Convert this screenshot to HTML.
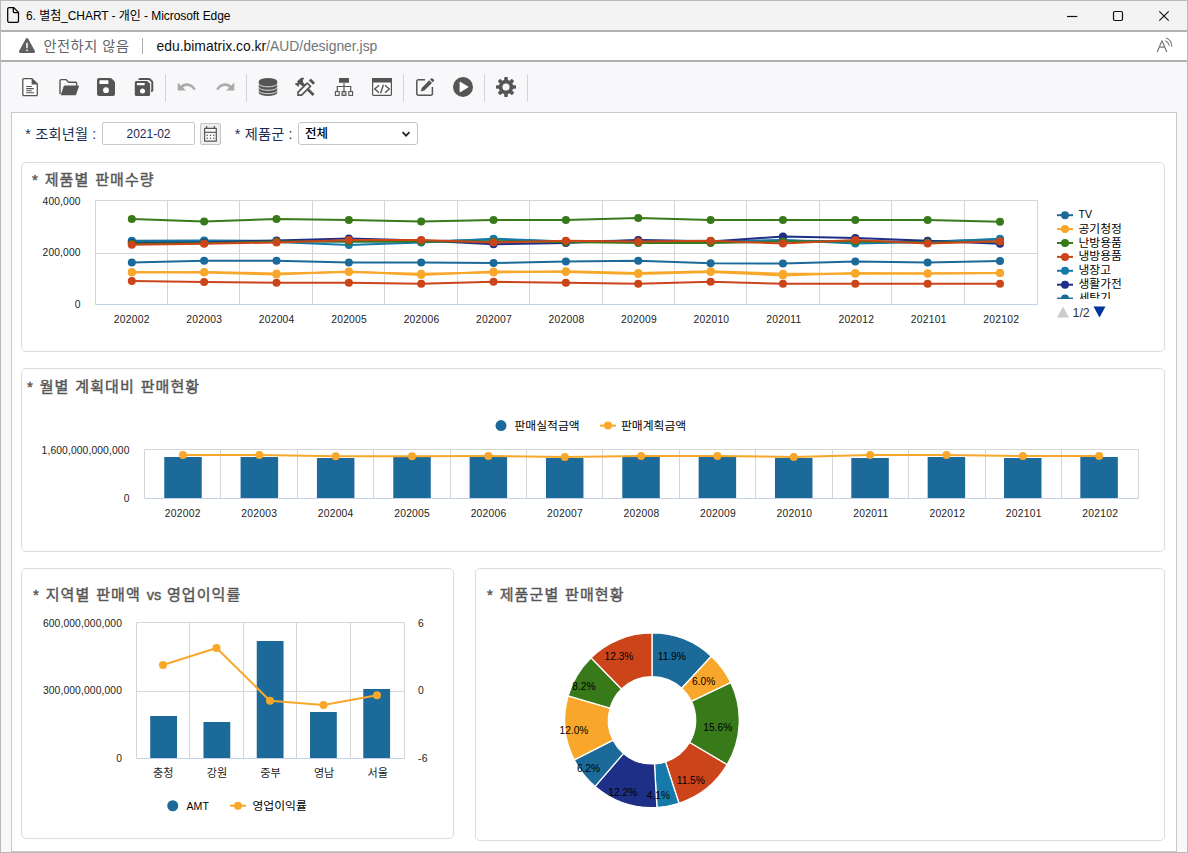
<!DOCTYPE html>
<html lang="ko">
<head>
<meta charset="utf-8">
<title>6. 별첨_CHART - 개인 - Microsoft Edge</title>
<style>
html,body{margin:0;padding:0}
body{width:1188px;height:853px;overflow:hidden;position:relative;background:#f8f8fa;font-family:"Liberation Sans","Noto Sans CJK KR",sans-serif;color:#000}
.abs{position:absolute}
#titlebar{left:0;top:0;width:1188px;height:30px;background:#f3f3f3}
#titletxt{left:26px;top:8px;font-size:12px;letter-spacing:-0.06px;line-height:16px;white-space:nowrap;color:#000}
#addr{left:0;top:32px;width:1188px;height:28px;background:#fff}
.hline{left:0;width:1188px;height:2px;background:#b2b2b2}
#unsafe{left:43.400px;top:36px;font-size:14.2px;letter-spacing:.55px;line-height:20px;color:#60646a;white-space:nowrap}
#url{left:156.500px;top:36px;font-size:13.9px;line-height:20px;color:#111;white-space:nowrap}
#url span{color:#70757a}
#panel{left:11px;top:112px;width:1166px;height:740px;background:#fff;border:1px solid #cacaca;box-sizing:border-box}
.card{background:#fff;border:1px solid #dcdcdc;border-radius:5px;box-sizing:border-box}
.ttl{font-size:15px;font-weight:normal;-webkit-text-stroke:.42px #555;letter-spacing:1.1px;word-spacing:.5px;color:#555;white-space:nowrap;line-height:20px}
.lbl{font-size:14.2px;letter-spacing:.2px;color:#1c2b52;white-space:nowrap;line-height:20px}
.sep{width:1px;height:28px;top:74px;background:#d4d4d4}
svg text{font-family:"Liberation Sans","Noto Sans CJK KR",sans-serif}
.ax text{font-size:10.3px;fill:#222;letter-spacing:.25px}
.ax.num text{letter-spacing:.12px}
.axk text{font-size:11.1px;fill:#222}
text.lg{font-size:11.8px;fill:#000}
text.pg{font-size:12.4px;fill:#333}
.dl text{font-size:10.2px;fill:#000}
.wb{left:0;top:0;width:1188px;height:853px;box-sizing:border-box;border:1px solid #b9b9b9;pointer-events:none}
</style>
</head>
<body>
<div class="abs" id="titlebar"></div>
<svg class="abs" style="left:6px;top:6px" width="15" height="18" viewBox="0 0 15 18"><path d="M1.700 3a1.300 1.300 0 0 1 1.300-1.300h4.800l4.700 4.700v8.600a1.300 1.300 0 0 1-1.300 1.300h-8.200a1.300 1.300 0 0 1-1.300-1.300zM7.300 1.900v3.600a1 1 0 0 0 1 1h3.900" fill="none" stroke="#000" stroke-width="1.250" stroke-linejoin="round"/></svg>
<div class="abs" id="titletxt">6. 별첨_CHART - 개인 - Microsoft Edge</div>
<svg class="abs" style="left:1060px;top:4px" width="120" height="24" viewBox="0 0 120 24"><path d="M7 12.500h10.300" stroke="#111" stroke-width="1.200" fill="none"/><rect x="53.5" y="7.5" width="9" height="9" rx="1.4" fill="none" stroke="#111" stroke-width="1.2"/><path d="M99.300 7.300l9.400 9.400M108.700 7.300l-9.400 9.400" stroke="#111" stroke-width="1.200" fill="none"/></svg>
<div class="abs hline" style="top:30px"></div>
<div class="abs" id="addr"></div>
<svg class="abs" style="left:18px;top:38px" width="18" height="16" viewBox="0 0 18 16"><path d="M9 0c.5 0 .95.270 1.200.700l6.700 12.300c.5.900-.1 2-1.200 2H2.300c-1.100 0-1.700-1.100-1.200-2L7.800.700c.250-.430.700-.700 1.200-.700z" fill="#606060"/><rect x="8.100" y="4.700" width="1.800" height="5.600" rx=".5" fill="#e6e6e6"/><rect x="8.100" y="11.500" width="1.800" height="1.700" rx=".4" fill="#e6e6e6"/></svg>
<div class="abs" id="unsafe">안전하지 않음</div>
<div class="abs" style="left:142px;top:38px;width:1px;height:16px;background:#a9a9a9"></div>
<div class="abs" id="url">edu.bimatrix.co.kr<span>/AUD/designer.jsp</span></div>
<svg class="abs" style="left:1152px;top:36px" width="24" height="20" viewBox="0 0 24 20"><path d="M5.200 16.100L10 4.700L14.800 16.100M6.900 11.100h6.200" fill="none" stroke="#7a7a7a" stroke-width="1.200" stroke-linejoin="round"/><path d="M13.700 4.900A6.100 6.100 0 0 1 17.200 9.400M14.300 2.100A8.800 8.800 0 0 1 19.700 10.400" fill="none" stroke="#7a7a7a" stroke-width="1.100" stroke-linecap="round"/></svg>
<div class="abs hline" style="top:60px;height:2px;background:#b0b0b0"></div>

<!--TB0-->
<div class="abs sep" style="left:165px"></div>
<div class="abs sep" style="left:246px"></div>
<div class="abs sep" style="left:403px"></div>
<div class="abs sep" style="left:484px"></div>
<div class="abs sep" style="left:527px"></div>
<svg class="abs" style="left:20px;top:76px" width="20" height="22" viewBox="0 0 20 22"><path d="M4 2.700h8l5.300 5.300v10.400a1.200 1.200 0 0 1-1.200 1.200H4a1.200 1.200 0 0 1-1.200-1.200V3.900a1.200 1.200 0 0 1 1.200-1.200z" fill="#fff" stroke="#555" stroke-width="1.300" stroke-linejoin="round"/><path d="M11.600 2.500l5.900 5.900h-5.900z" fill="#555"/><path d="M6.200 10.500h5.600M6.200 12.600h7.600M6.200 14.700h5.600M6.200 16.800h8" stroke="#555" stroke-width="1.100" fill="none"/></svg>
<svg class="abs" style="left:57px;top:76px" width="24" height="22" viewBox="0 0 24 22"><path d="M3 18V4.600a1 1 0 0 1 1-1h5.200l2.400 2.600h7a1 1 0 0 1 1 1v2.600" fill="none" stroke="#555" stroke-width="1.400" stroke-linejoin="round"/><path d="M3.700 19.200l3.100-9.100a.9.900 0 0 1 .85-.6h13.600a.7.700 0 0 1 .67.920l-2.800 8.200a.9.900 0 0 1-.85.600H3.700z" fill="#555"/></svg>
<svg class="abs" style="left:95px;top:76px" width="22" height="22" viewBox="0 0 22 22"><path d="M4 2h11.300a2 2 0 0 1 1.400.6l2.700 2.700a2 2 0 0 1 .6 1.400V18a2 2 0 0 1-2 2H4a2 2 0 0 1-2-2V4a2 2 0 0 1 2-2z" fill="#555"/><rect x="4.400" y="4.300" width="9" height="3.800" rx=".5" fill="#fff"/><circle cx="11" cy="14.200" r="2.900" fill="#fff"/></svg>
<svg class="abs" style="left:132px;top:76px" width="24" height="22" viewBox="0 0 24 22"><path d="M7.400 4V3.600a.6.600 0 0 1 .6-.6h8.900a1.500 1.500 0 0 1 1.060.44l1.900 1.900a1.500 1.500 0 0 1 .44 1.060v7.900a.6.600 0 0 1-.6.600h-.6" fill="none" stroke="#555" stroke-width="2"/><path d="M4.300 4.900h10.300a1.500 1.500 0 0 1 1.060.44l2 2a1.500 1.500 0 0 1 .44 1.060V18.400a1.500 1.500 0 0 1-1.500 1.500H4.300a1.500 1.500 0 0 1-1.500-1.500V6.400a1.500 1.500 0 0 1 1.500-1.500z" fill="#555"/><rect x="4.900" y="6.900" width="7.800" height="2.400" rx=".4" fill="#fff"/><circle cx="10.500" cy="15" r="2.500" fill="#fff"/></svg>
<svg class="abs" style="left:176px;top:80px" width="22" height="14" viewBox="0 0 22 14"><path d="M1.700 2.400v8.200h8.200l-3.100-3.100c1.300-1.100 3-1.700 4.800-1.500c2.600.3 4.800 1.900 5.900 4.200l2.200-1.100C18.200 6 15.300 3.800 11.900 3.400C9.300 3.100 6.800 4 5 5.700z" fill="#aaa"/></svg>
<svg class="abs" style="left:214px;top:80px" width="22" height="14" viewBox="0 0 22 14"><path d="M20.300 2.400v8.200h-8.200l3.100-3.100c-1.300-1.100-3-1.700-4.800-1.500c-2.600.3-4.800 1.900-5.900 4.200l-2.200-1.100C3.800 6 6.700 3.800 10.100 3.400c2.600-.3 5.100.6 6.900 2.300z" fill="#aaa"/></svg>
<svg class="abs" style="left:257px;top:76px" width="22" height="22" viewBox="0 0 22 22"><path d="M1.800 5.100A9.200 3.100 0 0 1 20.200 5.100V16.800A9.200 3.100 0 0 1 1.800 16.800Z" fill="#555"/><path d="M1.800 7.700A9.200 3.100 0 0 0 20.200 7.700M1.800 11.200A9.200 3.100 0 0 0 20.200 11.200M1.800 14.600A9.200 3.100 0 0 0 20.200 14.600" fill="none" stroke="#f8f8fa" stroke-width=".8"/></svg>
<svg class="abs" style="left:290px;top:72px" width="30" height="30" viewBox="0 0 30 30"><path d="M10.600 6.200L12.300 5.500L14.200 6.200L12.800 8.300L13.200 10.600L14.400 12.100L12 13.700L9.300 12.100L8.800 13.900L8.600 15.100L4.900 12.100L5.100 11.300L7.600 10.900L7.200 9.300Z" fill="#555"/><path d="M12.800 12.500L23.600 22.900" stroke="#555" stroke-width="2.800" fill="none"/><path d="M17.200 10.100L21.600 14.200L12 23.900H7.200V19.800Z" fill="#555"/><path d="M17.250 12.300L19.250 14.300L11.250 22.300H8.800V20.750Z" fill="#fbfbfc"/><path d="M18.850 8.450L23.100 12.700L24.600 11.200Q25.050 10.750 24.600 10.300L21.250 6.950Q20.800 6.500 20.350 6.950Z" fill="#555"/></svg>
<svg class="abs" style="left:333px;top:76px" width="22" height="22" viewBox="0 0 22 22"><rect x="6" y="2" width="10" height="4.800" rx=".6" fill="#555"/><path d="M10 6.800h2v8.200h-2z" fill="#999"/><path d="M4.300 15.200v-4.700h13.400v4.700" fill="none" stroke="#555" stroke-width="1.200"/><rect x="2.400" y="15.600" width="3.800" height="3.800" fill="#fff" stroke="#555" stroke-width="1.100"/><rect x="9.100" y="15.600" width="3.800" height="3.800" fill="#ccc" stroke="#555" stroke-width="1.100"/><rect x="15.800" y="15.600" width="3.800" height="3.800" fill="#fff" stroke="#555" stroke-width="1.100"/></svg>
<svg class="abs" style="left:370px;top:76px" width="24" height="22" viewBox="0 0 24 22"><rect x="2.600" y="2.600" width="18.800" height="16.800" rx=".8" fill="#fff" stroke="#555" stroke-width="1.200"/><rect x="2" y="2" width="20" height="4.500" fill="#555"/><path d="M9 9.300l-4.300 3.700l4.300 3.700M15 9.300l4.300 3.700l-4.300 3.700M13.400 8.800l-2.800 8.400" fill="none" stroke="#555" stroke-width="1.400"/></svg>
<svg class="abs" style="left:414px;top:75px" width="23" height="23" viewBox="0 0 23 23"><path d="M11 4.700H4.400a1.600 1.600 0 0 0-1.600 1.600v12.400a1.600 1.600 0 0 0 1.600 1.600h12.400a1.600 1.600 0 0 0 1.600-1.600v-6.600" fill="none" stroke="#555" stroke-width="1.500"/><path d="M15.300 5.300l2.700 2.700l-7.600 7.600l-3.600.9l.9-3.600zM16.100 4.500l1.100-1.100a.9.900 0 0 1 1.300 0l1.400 1.400a.9.900 0 0 1 0 1.300l-1.100 1.100z" fill="#555"/></svg>
<svg class="abs" style="left:452px;top:76px" width="22" height="22" viewBox="0 0 22 22"><circle cx="11" cy="11" r="10" fill="#555"/><path d="M8 6l8.200 5l-8.200 5z" fill="#fff" stroke="#fff" stroke-width=".8" stroke-linejoin="round"/></svg>
<svg class="abs" style="left:495px;top:76px" width="22" height="22" viewBox="0 0 22 22"><g fill="#555"><circle cx="11" cy="11" r="7.300"/><rect x="9.200" y="1" width="3.600" height="20" rx=".8"/><rect x="9.200" y="1" width="3.600" height="20" rx=".8" transform="rotate(45 11 11)"/><rect x="9.200" y="1" width="3.600" height="20" rx=".8" transform="rotate(90 11 11)"/><rect x="9.200" y="1" width="3.600" height="20" rx=".8" transform="rotate(135 11 11)"/></g><circle cx="11" cy="11" r="3.600" fill="#f8f8fa"/></svg>
<!--TB1-->

<div class="abs" id="panel"></div>
<div class="abs lbl" style="left:25.300px;top:124px">* 조회년월 :</div>
<div class="abs" style="left:102px;top:122px;width:93px;height:23px;box-sizing:border-box;border:1px solid #c9c9c9;border-radius:2px;background:#fff;font-size:12px;line-height:22px;text-align:center;color:#1c2b52">2021-02</div>
<div class="abs" style="left:200px;top:123px;width:21px;height:22px;box-sizing:border-box;border:1px solid #c4c4c8;border-radius:2px;background:#efeff1"></div>
<svg class="abs" style="left:203px;top:125px" width="15" height="18" viewBox="0 0 15 18"><rect x="1.600" y="3.400" width="11.700" height="12.800" rx=".3" fill="#fbfbfb" stroke="#555" stroke-width="1.200"/><path d="M1.600 7.300h11.700" stroke="#555" stroke-width="1.200"/><path d="M3.600 1v2.600M11.400 1v2.600" stroke="#555" stroke-width="1.300"/><g fill="#555"><rect x="3.500" y="9.600" width="1.300" height="1.300"/><rect x="6.850" y="9.600" width="1.300" height="1.300"/><rect x="10.100" y="9.600" width="1.300" height="1.300"/><rect x="3.500" y="12.600" width="1.300" height="1.300"/><rect x="6.850" y="12.600" width="1.300" height="1.300"/><rect x="10.100" y="12.600" width="1.300" height="1.300"/></g></svg>
<div class="abs lbl" style="left:234.800px;top:124px">* 제품군 :</div>
<div class="abs" style="left:298px;top:122px;width:120px;height:23px;box-sizing:border-box;border:1px solid #c4c4c4;border-radius:3px;background:#fff;font-size:12.5px;line-height:22px;color:#000;padding-left:6px;font-weight:500">전체</div>
<svg class="abs" style="left:400px;top:129px" width="12" height="10" viewBox="0 0 12 10"><path d="M2.500 3.200l3.500 3.500l3.500-3.500" fill="none" stroke="#222" stroke-width="1.700"/></svg>

<div class="abs card" style="left:21px;top:162px;width:1144px;height:190px"></div>
<div class="abs card" style="left:21px;top:368px;width:1144px;height:184px"></div>
<div class="abs card" style="left:21px;top:568px;width:433px;height:271px"></div>
<div class="abs card" style="left:475px;top:568px;width:690px;height:273px"></div>
<div class="abs ttl" style="left:32px;top:170px">* 제품별 판매수량</div>
<div class="abs ttl" style="left:27px;top:377px">* 월별 계획대비 판매현황</div>
<div class="abs ttl" style="left:33px;top:585px">* 지역별 판매액 <span style="letter-spacing:0;font-size:14.5px">vs</span> 영업이익률</div>
<div class="abs ttl" style="left:487px;top:585px">* 제품군별 판매현황</div>

<svg width="1188" height="853" viewBox="0 0 1188 853" style="position:absolute;left:0;top:0">
<path d="M95.5 200.5V304.5M167.5 200.5V304.5M239.5 200.5V304.5M312.5 200.5V304.5M384.5 200.5V304.5M457.5 200.5V304.5M529.5 200.5V304.5M602.5 200.5V304.5M674.5 200.5V304.5M746.5 200.5V304.5M819.5 200.5V304.5M891.5 200.5V304.5M964.5 200.5V304.5M1037.5 200.5V304.5M95.5 200.5H1037.5M95.5 253.5H1037.5" stroke="#d6d6d6" stroke-width="1" fill="none"/>
<path d="M95.5 304.5H1037.5" stroke="#c3d0e8" stroke-width="1" fill="none"/>
<polyline points="131.8,240.75 204.15,240.5 276.5,241 348.85,241.5 421.2,241.5 493.55,239.5 565.9,241.5 638.25,240.5 710.6,241 782.95,240.5 855.3,241.5 927.65,241.5 1000,239.5" fill="none" stroke="#1b6a99" stroke-width="2" stroke-linejoin="round"/>
<g fill="#1b6a99"><circle cx="131.8" cy="240.75" r="4"/><circle cx="204.15" cy="240.5" r="4"/><circle cx="276.5" cy="241" r="4"/><circle cx="348.85" cy="241.5" r="4"/><circle cx="421.2" cy="241.5" r="4"/><circle cx="493.55" cy="239.5" r="4"/><circle cx="565.9" cy="241.5" r="4"/><circle cx="638.25" cy="240.5" r="4"/><circle cx="710.6" cy="241" r="4"/><circle cx="782.95" cy="240.5" r="4"/><circle cx="855.3" cy="241.5" r="4"/><circle cx="927.65" cy="241.5" r="4"/><circle cx="1000" cy="239.5" r="4"/></g>
<polyline points="131.8,272.5 204.15,272 276.5,273.5 348.85,272 421.2,273.75 493.55,272.5 565.9,271.25 638.25,273 710.6,271.25 782.95,273.75 855.3,273.75 927.65,273.5 1000,273" fill="none" stroke="#f8a72a" stroke-width="2" stroke-linejoin="round"/>
<g fill="#f8a72a"><circle cx="131.8" cy="272.5" r="4"/><circle cx="204.15" cy="272" r="4"/><circle cx="276.5" cy="273.5" r="4"/><circle cx="348.85" cy="272" r="4"/><circle cx="421.2" cy="273.75" r="4"/><circle cx="493.55" cy="272.5" r="4"/><circle cx="565.9" cy="271.25" r="4"/><circle cx="638.25" cy="273" r="4"/><circle cx="710.6" cy="271.25" r="4"/><circle cx="782.95" cy="273.75" r="4"/><circle cx="855.3" cy="273.75" r="4"/><circle cx="927.65" cy="273.5" r="4"/><circle cx="1000" cy="273" r="4"/></g>
<polyline points="131.8,219 204.15,221.5 276.5,219 348.85,220 421.2,221.5 493.55,220 565.9,220 638.25,218 710.6,220 782.95,220 855.3,220 927.65,220 1000,221.75" fill="none" stroke="#38791a" stroke-width="2" stroke-linejoin="round"/>
<g fill="#38791a"><circle cx="131.8" cy="219" r="4"/><circle cx="204.15" cy="221.5" r="4"/><circle cx="276.5" cy="219" r="4"/><circle cx="348.85" cy="220" r="4"/><circle cx="421.2" cy="221.5" r="4"/><circle cx="493.55" cy="220" r="4"/><circle cx="565.9" cy="220" r="4"/><circle cx="638.25" cy="218" r="4"/><circle cx="710.6" cy="220" r="4"/><circle cx="782.95" cy="220" r="4"/><circle cx="855.3" cy="220" r="4"/><circle cx="927.65" cy="220" r="4"/><circle cx="1000" cy="221.75" r="4"/></g>
<polyline points="131.8,281 204.15,282 276.5,282.75 348.85,282.75 421.2,283.75 493.55,281.75 565.9,282.75 638.25,283.75 710.6,281.75 782.95,283.75 855.3,283.75 927.65,283.75 1000,283.75" fill="none" stroke="#cb441a" stroke-width="2" stroke-linejoin="round"/>
<g fill="#cb441a"><circle cx="131.8" cy="281" r="4"/><circle cx="204.15" cy="282" r="4"/><circle cx="276.5" cy="282.75" r="4"/><circle cx="348.85" cy="282.75" r="4"/><circle cx="421.2" cy="283.75" r="4"/><circle cx="493.55" cy="281.75" r="4"/><circle cx="565.9" cy="282.75" r="4"/><circle cx="638.25" cy="283.75" r="4"/><circle cx="710.6" cy="281.75" r="4"/><circle cx="782.95" cy="283.75" r="4"/><circle cx="855.3" cy="283.75" r="4"/><circle cx="927.65" cy="283.75" r="4"/><circle cx="1000" cy="283.75" r="4"/></g>
<polyline points="131.8,241.5 204.15,241 276.5,242 348.85,245 421.2,242.5 493.55,238.75 565.9,241.5 638.25,241.5 710.6,241.5 782.95,240 855.3,243.5 927.65,242 1000,238.75" fill="none" stroke="#157aa9" stroke-width="2" stroke-linejoin="round"/>
<g fill="#157aa9"><circle cx="131.8" cy="241.5" r="4"/><circle cx="204.15" cy="241" r="4"/><circle cx="276.5" cy="242" r="4"/><circle cx="348.85" cy="245" r="4"/><circle cx="421.2" cy="242.5" r="4"/><circle cx="493.55" cy="238.75" r="4"/><circle cx="565.9" cy="241.5" r="4"/><circle cx="638.25" cy="241.5" r="4"/><circle cx="710.6" cy="241.5" r="4"/><circle cx="782.95" cy="240" r="4"/><circle cx="855.3" cy="243.5" r="4"/><circle cx="927.65" cy="242" r="4"/><circle cx="1000" cy="238.75" r="4"/></g>
<polyline points="131.8,243 204.15,242.5 276.5,240.5 348.85,238.5 421.2,240.5 493.55,244.25 565.9,243 638.25,240 710.6,241.5 782.95,236.5 855.3,238 927.65,240.75 1000,243.75" fill="none" stroke="#1e2f87" stroke-width="2" stroke-linejoin="round"/>
<g fill="#1e2f87"><circle cx="131.8" cy="243" r="4"/><circle cx="204.15" cy="242.5" r="4"/><circle cx="276.5" cy="240.5" r="4"/><circle cx="348.85" cy="238.5" r="4"/><circle cx="421.2" cy="240.5" r="4"/><circle cx="493.55" cy="244.25" r="4"/><circle cx="565.9" cy="243" r="4"/><circle cx="638.25" cy="240" r="4"/><circle cx="710.6" cy="241.5" r="4"/><circle cx="782.95" cy="236.5" r="4"/><circle cx="855.3" cy="238" r="4"/><circle cx="927.65" cy="240.75" r="4"/><circle cx="1000" cy="243.75" r="4"/></g>
<polyline points="131.8,262.5 204.15,260.75 276.5,260.75 348.85,262.5 421.2,262.5 493.55,263 565.9,261.5 638.25,260.75 710.6,263.25 782.95,263.5 855.3,261.5 927.65,262.5 1000,261" fill="none" stroke="#1b6a99" stroke-width="2" stroke-linejoin="round"/>
<g fill="#1b6a99"><circle cx="131.8" cy="262.5" r="4"/><circle cx="204.15" cy="260.75" r="4"/><circle cx="276.5" cy="260.75" r="4"/><circle cx="348.85" cy="262.5" r="4"/><circle cx="421.2" cy="262.5" r="4"/><circle cx="493.55" cy="263" r="4"/><circle cx="565.9" cy="261.5" r="4"/><circle cx="638.25" cy="260.75" r="4"/><circle cx="710.6" cy="263.25" r="4"/><circle cx="782.95" cy="263.5" r="4"/><circle cx="855.3" cy="261.5" r="4"/><circle cx="927.65" cy="262.5" r="4"/><circle cx="1000" cy="261" r="4"/></g>
<polyline points="131.8,272 204.15,272.5 276.5,274.5 348.85,271.5 421.2,275 493.55,271.5 565.9,272 638.25,274 710.6,272 782.95,275.5 855.3,273 927.65,273.5 1000,273" fill="none" stroke="#f8a72a" stroke-width="2" stroke-linejoin="round"/>
<g fill="#f8a72a"><circle cx="131.8" cy="272" r="4"/><circle cx="204.15" cy="272.5" r="4"/><circle cx="276.5" cy="274.5" r="4"/><circle cx="348.85" cy="271.5" r="4"/><circle cx="421.2" cy="275" r="4"/><circle cx="493.55" cy="271.5" r="4"/><circle cx="565.9" cy="272" r="4"/><circle cx="638.25" cy="274" r="4"/><circle cx="710.6" cy="272" r="4"/><circle cx="782.95" cy="275.5" r="4"/><circle cx="855.3" cy="273" r="4"/><circle cx="927.65" cy="273.5" r="4"/><circle cx="1000" cy="273" r="4"/></g>
<polyline points="131.8,243.8 204.15,243.2 276.5,241.5 348.85,241.5 421.2,241.5 493.55,241.5 565.9,242 638.25,243 710.6,243 782.95,241.5 855.3,241.5 927.65,242.5 1000,241.5" fill="none" stroke="#38791a" stroke-width="2" stroke-linejoin="round"/>
<g fill="#38791a"><circle cx="131.8" cy="243.8" r="4"/><circle cx="204.15" cy="243.2" r="4"/><circle cx="276.5" cy="241.5" r="4"/><circle cx="348.85" cy="241.5" r="4"/><circle cx="421.2" cy="241.5" r="4"/><circle cx="493.55" cy="241.5" r="4"/><circle cx="565.9" cy="242" r="4"/><circle cx="638.25" cy="243" r="4"/><circle cx="710.6" cy="243" r="4"/><circle cx="782.95" cy="241.5" r="4"/><circle cx="855.3" cy="241.5" r="4"/><circle cx="927.65" cy="242.5" r="4"/><circle cx="1000" cy="241.5" r="4"/></g>
<polyline points="131.8,244.75 204.15,243.75 276.5,242.5 348.85,240 421.2,240 493.55,242.5 565.9,240.75 638.25,241.5 710.6,240.75 782.95,243.5 855.3,240 927.65,243.5 1000,241.25" fill="none" stroke="#cb441a" stroke-width="2" stroke-linejoin="round"/>
<g fill="#cb441a"><circle cx="131.8" cy="244.75" r="4"/><circle cx="204.15" cy="243.75" r="4"/><circle cx="276.5" cy="242.5" r="4"/><circle cx="348.85" cy="240" r="4"/><circle cx="421.2" cy="240" r="4"/><circle cx="493.55" cy="242.5" r="4"/><circle cx="565.9" cy="240.75" r="4"/><circle cx="638.25" cy="241.5" r="4"/><circle cx="710.6" cy="240.75" r="4"/><circle cx="782.95" cy="243.5" r="4"/><circle cx="855.3" cy="240" r="4"/><circle cx="927.65" cy="243.5" r="4"/><circle cx="1000" cy="241.25" r="4"/></g>
<g class="ax" text-anchor="middle"><text x="131.73" y="323">202002</text><text x="204.19" y="323">202003</text><text x="276.65" y="323">202004</text><text x="349.12" y="323">202005</text><text x="421.58" y="323">202006</text><text x="494.04" y="323">202007</text><text x="566.5" y="323">202008</text><text x="638.96" y="323">202009</text><text x="711.42" y="323">202010</text><text x="783.88" y="323">202011</text><text x="856.35" y="323">202012</text><text x="928.81" y="323">202101</text><text x="1001.27" y="323">202102</text></g>
<g class="ax num" text-anchor="end"><text x="80.6" y="205">400,000</text><text x="80.6" y="256">200,000</text><text x="80.6" y="308">0</text></g>
<clipPath id="lc"><rect x="1050" y="205" width="110" height="94"/></clipPath><g clip-path="url(#lc)">
<path d="M1057 215.2h16" stroke="#1b6a99" stroke-width="2"/><circle cx="1065" cy="215.2" r="4" fill="#1b6a99"/><text class="lg" x="1078.5" y="218.2" style="font-size:10.6px">TV</text>
<path d="M1057 229.1h16" stroke="#f8a72a" stroke-width="2"/><circle cx="1065" cy="229.1" r="4" fill="#f8a72a"/><text class="lg" x="1078.5" y="232.6">공기청정</text>
<path d="M1057 243h16" stroke="#38791a" stroke-width="2"/><circle cx="1065" cy="243" r="4" fill="#38791a"/><text class="lg" x="1078.5" y="246.5">난방용품</text>
<path d="M1057 256.9h16" stroke="#cb441a" stroke-width="2"/><circle cx="1065" cy="256.9" r="4" fill="#cb441a"/><text class="lg" x="1078.5" y="260.4">냉방용품</text>
<path d="M1057 270.8h16" stroke="#157aa9" stroke-width="2"/><circle cx="1065" cy="270.8" r="4" fill="#157aa9"/><text class="lg" x="1078.5" y="274.3">냉장고</text>
<path d="M1057 284.7h16" stroke="#1e2f87" stroke-width="2"/><circle cx="1065" cy="284.7" r="4" fill="#1e2f87"/><text class="lg" x="1078.5" y="288.2">생활가전</text>
<path d="M1057 298.6h16" stroke="#1b6a99" stroke-width="2"/><circle cx="1065" cy="298.6" r="4" fill="#1b6a99"/><text class="lg" x="1078.5" y="302.1">세탁기</text>
</g>
<path d="M1057 317.600l6-11.200l6 11.200z" fill="#cccccc"/><path d="M1093.500 306.400h12l-6 11.200z" fill="#003399"/><text x="1072.500" y="316.500" class="pg">1/2</text>
<path d="M144.5 449.5V498.5M220.5 449.5V498.5M297.5 449.5V498.5M373.5 449.5V498.5M450.5 449.5V498.5M526.5 449.5V498.5M602.5 449.5V498.5M679.5 449.5V498.5M755.5 449.5V498.5M832.5 449.5V498.5M908.5 449.5V498.5M985.5 449.5V498.5M1061.5 449.5V498.5M1138.5 449.5V498.5M144.5 449.5H1138.5" stroke="#d6d6d6" stroke-width="1" fill="none"/>
<g fill="#1b6a99"><rect x="164.25" y="457" width="37.5" height="41"/><rect x="240.59" y="457" width="37.5" height="41"/><rect x="316.93" y="458" width="37.5" height="40"/><rect x="393.27" y="457" width="37.5" height="41"/><rect x="469.61" y="457" width="37.5" height="41"/><rect x="545.95" y="458" width="37.5" height="40"/><rect x="622.29" y="457" width="37.5" height="41"/><rect x="698.63" y="457" width="37.5" height="41"/><rect x="774.97" y="458" width="37.5" height="40"/><rect x="851.31" y="458" width="37.5" height="40"/><rect x="927.65" y="457" width="37.5" height="41"/><rect x="1003.99" y="458" width="37.5" height="40"/><rect x="1080.33" y="457" width="37.5" height="41"/></g>
<path d="M144.5 498.5H1138.5" stroke="#c3d0e8" stroke-width="1" fill="none"/>
<polyline points="183,455 259.35,455 335.7,456.25 412.05,456.25 488.4,456 564.75,457 641.1,456 717.45,456 793.8,457 870.15,455 946.5,455 1022.85,456 1099.2,456" fill="none" stroke="#f8a72a" stroke-width="2" stroke-linejoin="round"/>
<g fill="#f8a72a"><circle cx="183" cy="455" r="4"/><circle cx="259.35" cy="455" r="4"/><circle cx="335.7" cy="456.25" r="4"/><circle cx="412.05" cy="456.25" r="4"/><circle cx="488.4" cy="456" r="4"/><circle cx="564.75" cy="457" r="4"/><circle cx="641.1" cy="456" r="4"/><circle cx="717.45" cy="456" r="4"/><circle cx="793.8" cy="457" r="4"/><circle cx="870.15" cy="455" r="4"/><circle cx="946.5" cy="455" r="4"/><circle cx="1022.85" cy="456" r="4"/><circle cx="1099.2" cy="456" r="4"/></g>
<g class="ax" text-anchor="middle"><text x="182.73" y="517">202002</text><text x="259.19" y="517">202003</text><text x="335.65" y="517">202004</text><text x="412.12" y="517">202005</text><text x="488.58" y="517">202006</text><text x="565.04" y="517">202007</text><text x="641.5" y="517">202008</text><text x="717.96" y="517">202009</text><text x="794.42" y="517">202010</text><text x="870.88" y="517">202011</text><text x="947.35" y="517">202012</text><text x="1023.81" y="517">202101</text><text x="1100.27" y="517">202102</text></g>
<g class="ax num" text-anchor="end"><text x="129.5" y="454">1,600,000,000,000</text><text x="129.5" y="502">0</text></g>
<circle cx="501" cy="425.6" r="5.5" fill="#1b6a99"/><text class="lg" x="514.5" y="429.6">판매실적금액</text>
<path d="M600 425.6h16" stroke="#f8a72a" stroke-width="2"/><circle cx="608" cy="425.6" r="4" fill="#f8a72a"/><text class="lg" x="621" y="429.6">판매계획금액</text>
<path d="M136.5 622.5V758.5M189.5 622.5V758.5M243.5 622.5V758.5M296.5 622.5V758.5M350.5 622.5V758.5M404.5 622.5V758.5M136.5 622.5H404.5M136.5 691.5H404.5" stroke="#d6d6d6" stroke-width="1" fill="none"/>
<g fill="#1b6a99"><rect x="150.2" y="716" width="26.8" height="42"/><rect x="203.47" y="722" width="26.8" height="36"/><rect x="256.74" y="641" width="26.8" height="117"/><rect x="310.01" y="712" width="26.8" height="46"/><rect x="363.28" y="689" width="26.8" height="69"/></g>
<path d="M136.5 758.5H404.5" stroke="#c3d0e8" stroke-width="1" fill="none"/>
<polyline points="163,665 216.5,648 270,700.75 323.5,705 377,695.25" fill="none" stroke="#f8a72a" stroke-width="2" stroke-linejoin="round"/>
<g fill="#f8a72a"><circle cx="163" cy="665" r="4"/><circle cx="216.5" cy="648" r="4"/><circle cx="270" cy="700.75" r="4"/><circle cx="323.5" cy="705" r="4"/><circle cx="377" cy="695.25" r="4"/></g>
<g class="axk" text-anchor="middle"><text x="163.3" y="777">충청</text><text x="216.9" y="777">강원</text><text x="270.5" y="777">중부</text><text x="324.1" y="777">영남</text><text x="377.7" y="777">서울</text></g>
<g class="ax num" text-anchor="end"><text x="122" y="627">600,000,000,000</text><text x="122" y="694">300,000,000,000</text><text x="122" y="762">0</text></g>
<g class="ax"><text x="418" y="626.8">6</text><text x="418" y="694">0</text><text x="418" y="762">-6</text></g>
<circle cx="172.75" cy="805.75" r="5.5" fill="#1b6a99"/><text class="lg" x="186.5" y="809.75" style="font-size:10.6px">AMT</text>
<path d="M230 805.75h16" stroke="#f8a72a" stroke-width="2"/><circle cx="238" cy="805.75" r="4" fill="#f8a72a"/><text class="lg" x="252.5" y="809.75">영업이익률</text>
<path d="M652 632.95A87.3 87.3 0 0 1 711.36 656.24L681.71 688.21A43.7 43.7 0 0 0 652 676.55Z" fill="#1b6a99" stroke="#fff" stroke-width="1.3" stroke-linejoin="round"/>
<path d="M711.36 656.24A87.3 87.3 0 0 1 730.76 682.58L691.42 701.4A43.7 43.7 0 0 0 681.71 688.21Z" fill="#f8a72a" stroke="#fff" stroke-width="1.3" stroke-linejoin="round"/>
<path d="M730.76 682.58A87.3 87.3 0 0 1 727.14 764.69L689.61 742.5A43.7 43.7 0 0 0 691.42 701.4Z" fill="#38791a" stroke="#fff" stroke-width="1.3" stroke-linejoin="round"/>
<path d="M727.14 764.69A87.3 87.3 0 0 1 678.98 803.28L665.5 761.81A43.7 43.7 0 0 0 689.61 742.5Z" fill="#cb441a" stroke="#fff" stroke-width="1.3" stroke-linejoin="round"/>
<path d="M678.98 803.28A87.3 87.3 0 0 1 656.93 807.41L654.47 763.88A43.7 43.7 0 0 0 665.5 761.81Z" fill="#157aa9" stroke="#fff" stroke-width="1.3" stroke-linejoin="round"/>
<path d="M656.93 807.41A87.3 87.3 0 0 1 595.09 786.45L623.51 753.39A43.7 43.7 0 0 0 654.47 763.88Z" fill="#1e2f87" stroke="#fff" stroke-width="1.3" stroke-linejoin="round"/>
<path d="M595.09 786.45A87.3 87.3 0 0 1 574.22 759.88L613.06 740.09A43.7 43.7 0 0 0 623.51 753.39Z" fill="#1b6a99" stroke="#fff" stroke-width="1.3" stroke-linejoin="round"/>
<path d="M574.22 759.88A87.3 87.3 0 0 1 568.17 695.89L610.04 708.06A43.7 43.7 0 0 0 613.06 740.09Z" fill="#f8a72a" stroke="#fff" stroke-width="1.3" stroke-linejoin="round"/>
<path d="M568.17 695.89A87.3 87.3 0 0 1 591.05 657.75L621.49 688.96A43.7 43.7 0 0 0 610.04 708.06Z" fill="#38791a" stroke="#fff" stroke-width="1.3" stroke-linejoin="round"/>
<path d="M591.05 657.75A87.3 87.3 0 0 1 652 632.95L652 676.55A43.7 43.7 0 0 0 621.49 688.96Z" fill="#cb441a" stroke="#fff" stroke-width="1.3" stroke-linejoin="round"/>
<g class="dl" text-anchor="middle"><text x="671.8" y="660.1">11.9%</text><text x="703.7" y="685.1">6.0%</text><text x="717.8" y="730.9">15.6%</text><text x="690.8" y="784.1">11.5%</text><text x="658.4" y="798.9">4.1%</text><text x="622.8" y="796.3">12.2%</text><text x="588.5" y="771.9">6.2%</text><text x="574" y="733.5">12.0%</text><text x="583.9" y="690.1">8.2%</text><text x="619" y="660.1">12.3%</text></g>
</svg>
<div class="abs wb"></div>
</body>
</html>
